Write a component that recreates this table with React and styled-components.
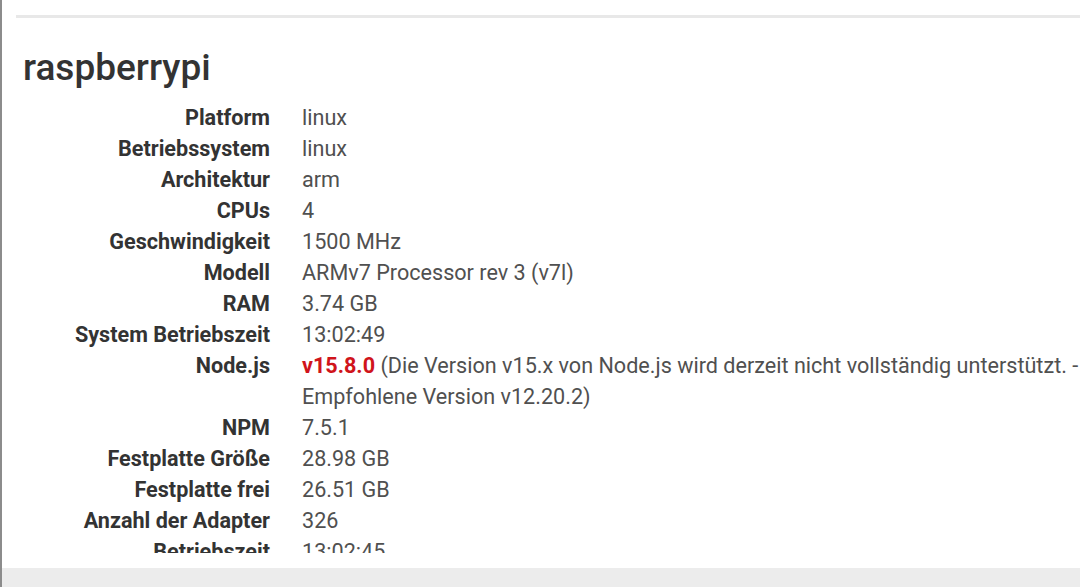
import React from "react";
import styled, { createGlobalStyle } from "styled-components";

const GlobalStyle = createGlobalStyle`
  html, body {
    margin: 0;
    padding: 0;
    overflow: hidden;
    background: #fff;
  }
  body {
    font-family: Roboto, "Liberation Sans", Arial, sans-serif;
  }
`;

const Page = styled.div`
  display: flex;
  flex-direction: column;
  height: 587px;
  border-left: 2px solid #8c8c8c;
  box-sizing: border-box;
`;

const Main = styled.div`
  flex: 1;
  padding: 15px 0 15px 14px;
  overflow: hidden;
  display: flex;
  flex-direction: column;
`;

const Card = styled.div`
  flex: 1;
  width: 1090px;
  border-top: 3px solid #e8e8e8;
  overflow: hidden;
  display: flex;
  flex-direction: column;
`;

const Title = styled.h2`
  margin: 30px 0 14px 7px;
  font-size: 37px;
  line-height: 40px;
  font-weight: 500;
  color: #333;
`;

const InfoGrid = styled.div`
  display: grid;
  grid-template-columns: 254px 1fr;
  column-gap: 32px;
  font-size: 21.6px;
  line-height: 31px;
  overflow: hidden;
  flex: 1;
  align-content: start;
`;

const Label = styled.div`
  text-align: right;
  font-weight: 700;
  color: #333;
  white-space: nowrap;
`;

const Value = styled.div`
  color: #505050;
`;

const Version = styled.span`
  color: #d0141b;
  font-weight: 700;
`;

const Footer = styled.div`
  height: 19px;
  background: #ececec;
  flex-shrink: 0;
`;

const rows = [
  ["Platform", "linux"],
  ["Betriebssystem", "linux"],
  ["Architektur", "arm"],
  ["CPUs", "4"],
  ["Geschwindigkeit", "1500 MHz"],
  ["Modell", "ARMv7 Processor rev 3 (v7l)"],
  ["RAM", "3.74 GB"],
  ["System Betriebszeit", "13:02:49"],
  [
    "Node.js",
    <>
      <Version>v15.8.0</Version> (Die Version v15.x von Node.js wird derzeit
      nicht vollständig unterstützt. - Empfohlene Version v12.20.2)
    </>,
  ],
  ["NPM", "7.5.1"],
  ["Festplatte Größe", "28.98 GB"],
  ["Festplatte frei", "26.51 GB"],
  ["Anzahl der Adapter", "326"],
  ["Betriebszeit", "13:02:45"],
];

const App = () => {
  return (
    <>
      <GlobalStyle />
      <Page>
        <Main>
          <Card>
            <Title>raspberrypi</Title>
            <InfoGrid>
              {rows.map(([label, value]) => (
                <React.Fragment key={label}>
                  <Label>{label}</Label>
                  <Value>{value}</Value>
                </React.Fragment>
              ))}
            </InfoGrid>
          </Card>
        </Main>
        <Footer />
      </Page>
    </>
  );
};

export default App;
